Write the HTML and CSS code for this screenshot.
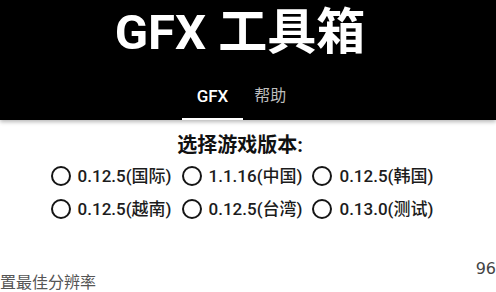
FILE: index.html
```html
<!DOCTYPE html>
<html lang="zh-CN">
<head>
<meta charset="utf-8">
<title>GFX 工具箱</title>
<link rel="stylesheet" href="styles.css">
</head>
<body>
<header class="appbar">
  <h1 class="title">GFX 工具箱</h1>
  <nav class="tabs">
    <div class="tab tab-active">GFX</div>
    <div class="tab tab-help">帮助</div>
  </nav>
</header>
<main class="content">
  <h2 class="heading">选择游戏版本:</h2>
  <div class="radio-row">
    <label class="option"><span class="radio"></span><span class="opt-text">0.12.5(国际)</span></label>
    <label class="option"><span class="radio"></span><span class="opt-text">1.1.16(中国)</span></label>
    <label class="option"><span class="radio"></span><span class="opt-text">0.12.5(韩国)</span></label>
  </div>
  <div class="radio-row">
    <label class="option"><span class="radio"></span><span class="opt-text">0.12.5(越南)</span></label>
    <label class="option"><span class="radio"></span><span class="opt-text">0.12.5(台湾)</span></label>
    <label class="option"><span class="radio"></span><span class="opt-text">0.13.0(测试)</span></label>
  </div>
  <div class="setting-row">
    <span class="setting-label">置最佳分辨率</span>
    <span class="setting-value">96</span>
  </div>
</main>
</body>
</html>
```
FILE: styles.css
```css
html, body {
  margin: 0;
  padding: 0;
  background: #ffffff;
}
body {
  width: 496px;
  height: 292px;
  overflow: hidden;
  font-family: Roboto, "Noto Sans CJK SC", sans-serif;
}
.appbar {
  background: #000000;
  height: 120px;
  width: 496px;
  padding-right: 16px;
  box-sizing: border-box;
  box-shadow: 0 2px 4px rgba(0, 0, 0, 0.28);
  position: relative;
  z-index: 1;
  display: flex;
  flex-direction: column;
  align-items: center;
}
.title {
  margin: 0;
  font-size: 49px;
  line-height: 66px;
  font-weight: 700;
  color: #ffffff;
  white-space: nowrap;
}
.tabs {
  display: flex;
  padding-top: 20px;
}
.tab {
  font-size: 17px;
  line-height: 20px;
  padding: 0 15px 12px;
  border-bottom: 2px solid transparent;
  font-weight: 500;
  color: #ffffff;
}
.tab-active {
  border-bottom-color: #ffffff;
}
.tab-help {
  padding: 0 12px 12px 11px;
  font-weight: 400;
  color: #bdbdbd;
  font-size: 16px;
}
.content {
  width: 496px;
  padding-right: 16px;
  box-sizing: border-box;
  display: flex;
  flex-direction: column;
  align-items: center;
}
.heading {
  margin: 11px 0 0;
  font-size: 20px;
  line-height: 28px;
  font-weight: 700;
  color: #111111;
}
.radio-row {
  display: flex;
  gap: 10px;
  height: 33px;
  align-items: center;
  padding-left: 4px;
}
.option {
  display: flex;
  align-items: center;
  gap: 7px;
}
.radio {
  width: 20px;
  height: 20px;
  box-sizing: border-box;
  border: 2px solid #151515;
  border-radius: 50%;
}
.opt-text {
  font-size: 17px;
  line-height: 22px;
  font-weight: 500;
  color: #1c1c1c;
  white-space: nowrap;
}
.setting-row {
  align-self: stretch;
  width: 496px;
  margin-top: 34px;
  display: flex;
  justify-content: space-between;
  align-items: flex-start;
}
.setting-label {
  padding-top: 12px;
  font-family: "Noto Sans CJK SC", sans-serif;
  font-size: 16px;
  line-height: 20px;
  color: #555555;
  font-weight: 400;
}
.setting-value {
  font-family: "DejaVu Sans", sans-serif;
  font-size: 16px;
  line-height: 20px;
  color: #444444;
  white-space: nowrap;
}
```
